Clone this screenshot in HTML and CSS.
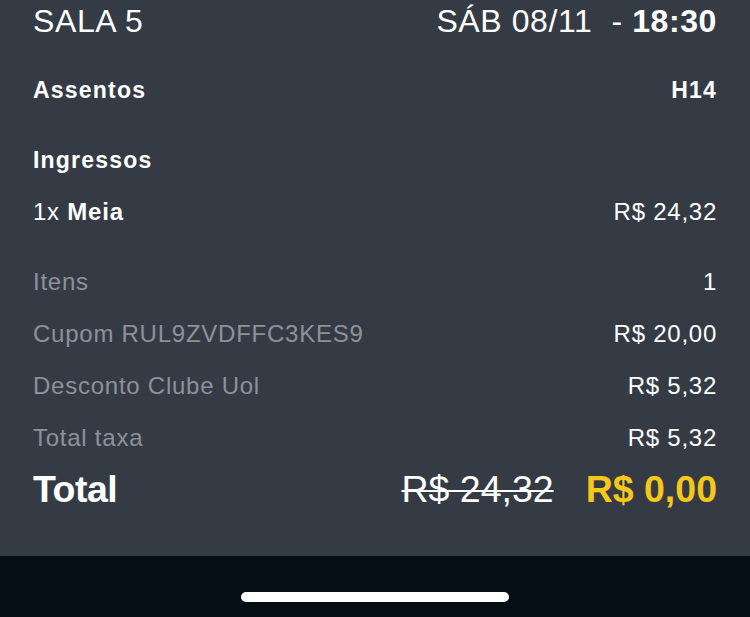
FILE: index.html
```html
<!DOCTYPE html>
<html lang="pt-BR">
<head>
  <meta charset="UTF-8" />
  <meta name="viewport" content="width=device-width, initial-scale=1.0" />
  <title>Resumo do pedido</title>
  <link rel="stylesheet" href="styles.css">
</head>
<body>
  <div class="summary">
    <div class="row header">
      <span>SALA 5</span>
      <span>SÁB 08/11&nbsp; - <strong>18:30</strong></span>
    </div>

    <div class="row section seats">
      <strong>Assentos</strong>
      <strong>H14</strong>
    </div>

    <div class="row section">
      <strong>Ingressos</strong>
    </div>
    <div class="row item">
      <span>1x <strong>Meia</strong></span>
      <span>R$ 24,32</span>
    </div>

    <div class="row detail first">
      <span class="label">Itens</span>
      <span>1</span>
    </div>
    <div class="row detail">
      <span class="label">Cupom RUL9ZVDFFC3KES9</span>
      <span>R$ 20,00</span>
    </div>
    <div class="row detail">
      <span class="label">Desconto Clube Uol</span>
      <span>R$ 5,32</span>
    </div>
    <div class="row detail">
      <span class="label">Total taxa</span>
      <span>R$ 5,32</span>
    </div>

    <div class="row total">
      <strong class="total-label">Total</strong>
      <span class="prices">
        <s class="old-price">R$ 24,32</s>
        <strong class="new-price">R$ 0,00</strong>
      </span>
    </div>
  </div>

  <div class="home-bar">
    <div class="home-indicator"></div>
  </div>
</body>
</html>
```

FILE: styles.css
```css
* {
  margin: 0;
  padding: 0;
  box-sizing: border-box;
}

body {
  font-family: 'Liberation Sans', Arial, sans-serif;
  background-color: #353b45;
  color: #fff;
  height: 617px;
  display: flex;
  flex-direction: column;
  overflow: hidden;
}

.summary {
  flex: 1;
  padding: 0 33px;
}

.row {
  display: flex;
  justify-content: space-between;
  align-items: center;
  height: 40px;
  font-size: 24px;
  letter-spacing: 0.75px;
}

.header {
  height: 42px;
  font-size: 32px;
  letter-spacing: 0.6px;
}

.section {
  margin-top: 30px;
  font-size: 23px;
  letter-spacing: 1.2px;
}

.seats {
  margin-top: 28px;
}

.item {
  margin-top: 12px;
}

.item strong {
  letter-spacing: 0.8px;
}

.detail {
  margin-top: 12px;
}

.detail.first {
  margin-top: 30px;
}

.detail .label {
  color: #8d9199;
}

.total {
  margin-top: 11px;
  font-size: 37.5px;
  letter-spacing: 0;
}

.total-label {
  letter-spacing: -0.5px;
}

.prices {
  display: flex;
  gap: 32px;
}

.old-price {
  text-decoration-thickness: 2px;
}

.new-price {
  color: #f6c71b;
}

.home-bar {
  height: 61px;
  background-color: #040e15;
  display: flex;
  justify-content: center;
  padding-top: 36px;
}

.home-indicator {
  width: 268px;
  height: 10px;
  border-radius: 5px;
  background-color: #fff;
}
```
